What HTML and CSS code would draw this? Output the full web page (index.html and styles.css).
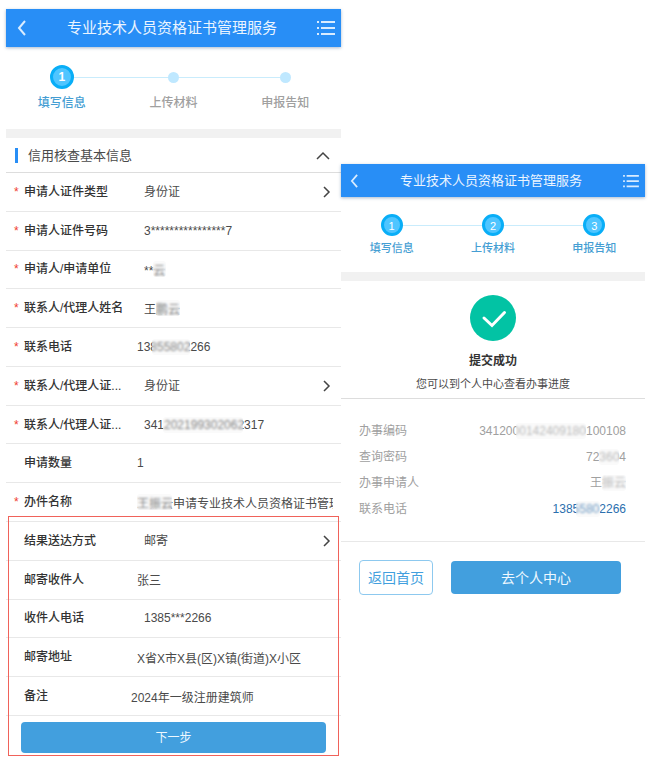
FILE: index.html
```html
<!DOCTYPE html>
<html lang="zh-CN">
<head>
<meta charset="utf-8">
<meta name="viewport" content="width=device-width, initial-scale=1">
<title>专业技术人员资格证书管理服务</title>
<link rel="stylesheet" href="styles.css">
</head>
<body>
<main class="screens">
  <section class="screen">
    <header class="bar">
      <button class="bar-btn" type="button" aria-label="返回"><svg width="10" height="16" viewBox="0 0 10 16"><path d="M8 1 2 8l6 7"/></svg></button>
      <h1>专业技术人员资格证书管理服务</h1>
      <button class="bar-btn" type="button" aria-label="菜单"><svg width="18" height="16" viewBox="0 0 18 16"><path d="M0 2h2M4 2h14M0 8h2M4 8h14M0 14h2M4 14h14"/></svg></button>
    </header>
    <ol class="steps">
      <li class="step on"><span class="dot">1</span><span>填写信息</span></li>
      <li class="step"><span class="dot"></span><span>上传材料</span></li>
      <li class="step"><span class="dot"></span><span>申报告知</span></li>
    </ol>
    <form class="form">
      <h2 class="section-title"><span>信用核查基本信息</span><button type="button" aria-label="收起"><svg width="14" height="9" viewBox="0 0 14 9"><path d="m1 8 6-6 6 6"/></svg></button></h2>
      <div class="rows">
        <div class="row required indented"><label for="idtype">申请人证件类型</label><div class="value pick"><select id="idtype"><option>身份证</option></select><svg width="8" height="12" viewBox="0 0 8 12"><path d="m1 1 5 5-5 5"/></svg></div></div>
        <div class="row required indented"><label for="idno">申请人证件号码</label><div class="value"><input id="idno" value="3****************7"></div></div>
        <div class="row required indented"><label for="unit">申请人/申请单位</label><div class="value"><input id="unit" value="**云"><i class="mosaic m-unit"></i></div></div>
        <div class="row required indented"><label for="agent">联系人/代理人姓名</label><div class="value"><input id="agent" value="王鹏云"><i class="mosaic m-agent"></i></div></div>
        <div class="row required"><label for="tel">联系电话</label><div class="value"><input id="tel" type="tel" value="13855802266"><i class="mosaic m-tel"></i></div></div>
        <div class="row required indented"><label for="agenttype">联系人/代理人证...</label><div class="value pick"><select id="agenttype"><option>身份证</option></select><svg width="8" height="12" viewBox="0 0 8 12"><path d="m1 1 5 5-5 5"/></svg></div></div>
        <div class="row required indented"><label for="agentno">联系人/代理人证...</label><div class="value"><input id="agentno" value="341202199302062317"><i class="mosaic m-no"></i></div></div>
        <div class="row"><label for="count">申请数量</label><div class="value"><input id="count" value="1"></div></div>
        <div class="row required"><label for="subject">办件名称</label><div class="value"><input id="subject" value="王振云申请专业技术人员资格证书管理服务"><i class="mosaic m-subject"></i></div></div>
      </div>
      <div class="marked">
        <div class="rows mail">
          <div class="row indented"><label for="delivery">结果送达方式</label><div class="value pick"><select id="delivery"><option>邮寄</option></select><svg width="8" height="12" viewBox="0 0 8 12"><path d="m1 1 5 5-5 5"/></svg></div></div>
          <div class="row"><label for="receiver">邮寄收件人</label><div class="value"><input id="receiver" value="张三"></div></div>
          <div class="row indented"><label for="rtel">收件人电话</label><div class="value"><input id="rtel" type="tel" value="1385***2266"></div></div>
          <div class="row"><label for="addr">邮寄地址</label><div class="value"><input id="addr" value="X省X市X县(区)X镇(街道)X小区"></div></div>
          <div class="row note"><label for="note">备注</label><div class="value"><input id="note" value="2024年一级注册建筑师"></div></div>
        </div>
        <button class="next" type="button">下一步</button>
      </div>
    </form>
  </section>

  <section class="screen result">
    <header class="bar">
      <button class="bar-btn" type="button" aria-label="返回"><svg width="9" height="14" viewBox="0 0 10 16"><path d="M8 1 2 8l6 7"/></svg></button>
      <h1>专业技术人员资格证书管理服务</h1>
      <button class="bar-btn" type="button" aria-label="菜单"><svg width="16" height="14" viewBox="0 0 18 16"><path d="M0 2h2M4 2h14M0 8h2M4 8h14M0 14h2M4 14h14"/></svg></button>
    </header>
    <ol class="steps">
      <li class="step on"><span class="dot">1</span><span>填写信息</span></li>
      <li class="step on"><span class="dot">2</span><span>上传材料</span></li>
      <li class="step on"><span class="dot">3</span><span>申报告知</span></li>
    </ol>
    <div class="done">
      <svg width="46" height="46" viewBox="0 0 46 46"><circle cx="23" cy="23" r="23" fill="#02c3a4"/><path d="m14 23 8 7.500 12.500-13" fill="none" stroke="#fff" stroke-width="3" stroke-linecap="round"/></svg>
      <h2>提交成功</h2>
      <p>您可以到个人中心查看办事进度</p>
    </div>
    <dl class="facts">
      <div><dt>办事编码</dt><dd>3412000142409180100108<i class="mosaic m-code"></i></dd></div>
      <div><dt>查询密码</dt><dd>723604<i class="mosaic m-pass"></i></dd></div>
      <div><dt>办事申请人</dt><dd>王振云<i class="mosaic m-name"></i></dd></div>
      <div><dt>联系电话</dt><dd><a href="tel:13855802266">13855802266</a><i class="mosaic m-phone"></i></dd></div>
    </dl>
    <div class="actions">
      <button class="home" type="button">返回首页</button>
      <button class="center" type="button">去个人中心</button>
    </div>
  </section>
</main>
</body>
</html>
```
FILE: styles.css
```css
* { box-sizing: border-box; }

body {
  margin: 0;
  background: #fff;
  color: #4a4a4a;
  font: 12px/18px "Liberation Sans", "Noto Sans CJK SC", sans-serif;
}

h1, h2, p, ol, dl, dd { margin: 0; padding: 0; }
ol { list-style: none; }
svg { display: block; flex: none; }
button { font: inherit; cursor: pointer; }

.screens {
  display: grid;
  grid-template-columns: 335fr 304fr;
  align-items: start;
  padding: 9px 7px 8px 6px;
}

.screen { min-width: 0; }
.result { margin-top: 155px; }

/* Title bar */
.bar {
  display: flex;
  align-items: center;
  justify-content: space-between;
  height: 38px;
  padding: 0 6px 0 11px;
  background: #288ef6;
  box-shadow: 0 1px 3px rgba(40, 80, 130, .4);
  color: #eaf4ff;
}
.bar h1 { font-size: 15px; font-weight: 400; white-space: nowrap; }
.bar-btn { padding: 0; border: 0; background: none; }
.bar-btn svg { fill: none; stroke: #d9ecff; stroke-width: 2; }
.result .bar { height: 33px; padding: 0 6px 0 9px; }
.result .bar h1 { font-size: 13px; }

/* Progress */
.steps {
  display: grid;
  grid-template-columns: repeat(3, 1fr);
  height: 91px;
  padding-top: 18px;
  border-bottom: 9px solid #f1f1f1;
  color: #a0a0a0;
}
.step {
  position: relative;
  display: grid;
  grid-template-rows: 24px 18px;
  row-gap: 5px;
  align-content: start;
  place-items: center;
}
.step + .step::before {
  content: "";
  position: absolute;
  top: 12px;
  right: 50%;
  width: 100%;
  height: 1px;
  background: #c9ecfc;
}
.dot {
  z-index: 1;
  width: 11px;
  height: 11px;
  border-radius: 50%;
  background: #bfe8ff;
}
.step { font-weight: 500; }
.on { color: #459ed3; }
.on .dot {
  display: grid;
  place-items: center;
  width: 24px;
  height: 24px;
  border: 3px solid #09aef7;
  background: #4fc5ff;
  color: #fff;
  font-weight: 700;
}
.result .steps { height: 84px; padding-top: 17px; font-size: 11px; }
.result .step { grid-template-rows: 22px 18px; row-gap: 3px; }
.result .step::before { top: 11px; }
.result .dot { width: 22px; height: 22px; font-weight: 400; }

/* Form */
.section-title {
  display: flex;
  align-items: center;
  justify-content: space-between;
  height: 35px;
  padding: 0 11px 0 9px;
  border-bottom: 1px solid #ddd;
  font-size: 13px;
  font-weight: 400;
}
.section-title span { padding-left: 10px; border-left: 3px solid #288ef6; line-height: 15px; }
.section-title button { padding: 0; border: 0; background: none; }
.section-title svg, .pick svg { fill: none; stroke: #444; stroke-width: 1.5; }

.rows { display: grid; grid-auto-rows: 1fr; min-height: 349px; }
.mail { min-height: 194px; }
.row {
  display: grid;
  grid-template-columns: 10px 113px minmax(0, 1fr);
  align-items: center;
  padding: 0 8px;
  border-bottom: 1px solid #e8e8e8;
}
.row::before { content: ""; color: #f0402f; }
.required::before { content: "*"; }
.row label { color: #333; font-weight: 500; white-space: nowrap; }
.indented { grid-template-columns: 10px 120px minmax(0, 1fr); }
.note { grid-template-columns: 10px 107px minmax(0, 1fr); }
.value { position: relative; display: flex; align-items: center; }
.value input, .value select {
  flex: 1;
  min-width: 0;
  height: 24px;
  margin: 0;
  padding: 0;
  border: 0;
  outline: 0;
  background: none;
  color: #4a4a4a;
  font: inherit;
  appearance: none;
}
.pick { padding-right: 2px; }

/* Masked parts of personal data */
.mosaic {
  position: absolute;
  top: 4px;
  height: 16px;
  border-radius: 3px;
  background: rgba(240, 240, 240, .35);
  backdrop-filter: blur(1px);
}
.m-unit { left: 9px; width: 13px; }
.m-agent { left: 12px; width: 24px; }
.m-tel { left: 15px; width: 38px; }
.m-no { left: 19px; width: 80px; }
.m-subject { left: 0; width: 35px; }

/* Highlighted delivery block */
.marked { position: relative; }
.marked::after {
  content: "";
  position: absolute;
  inset: -6px 2px -3px;
  border: 1px solid #f0625a;
  pointer-events: none;
}
.next, .center { border: 0; border-radius: 4px; background: #429fde; color: #eef8ff; }
.next { display: block; width: calc(100% - 30px); height: 31px; margin: 6px 15px 0; }

/* Result */
.done {
  display: grid;
  justify-items: center;
  height: 118px;
  padding-top: 14px;
  border-bottom: 1px solid #ddd;
}
.done h2 { margin-top: 6px; color: #333; font-size: 12px; line-height: 18px; }
.done p { font-size: 11px; }

.facts { padding: 19px 19px 19px 18px; border-bottom: 1px solid #e8e8e8; color: #a0a0a0; }
.facts div { display: flex; align-items: center; justify-content: space-between; height: 26px; }
.facts dd { position: relative; }
.facts a { color: #2c6fae; text-decoration: none; }
.facts .mosaic { top: 1px; }
.m-code { right: 40px; width: 70px; }
.m-pass { right: 7px; width: 20px; }
.m-name { right: 0; width: 24px; }
.m-phone { right: 26px; width: 24px; }

.actions { display: flex; align-items: center; gap: 18px; padding: 18px 24px 18px 18px; font-size: 14px; }
.home {
  width: 74px;
  height: 35px;
  padding: 0;
  border: 1px solid #8dc9ef;
  border-radius: 4px;
  background: #fff;
  color: #429fde;
}
.center { flex: 1; height: 33px; }
```
